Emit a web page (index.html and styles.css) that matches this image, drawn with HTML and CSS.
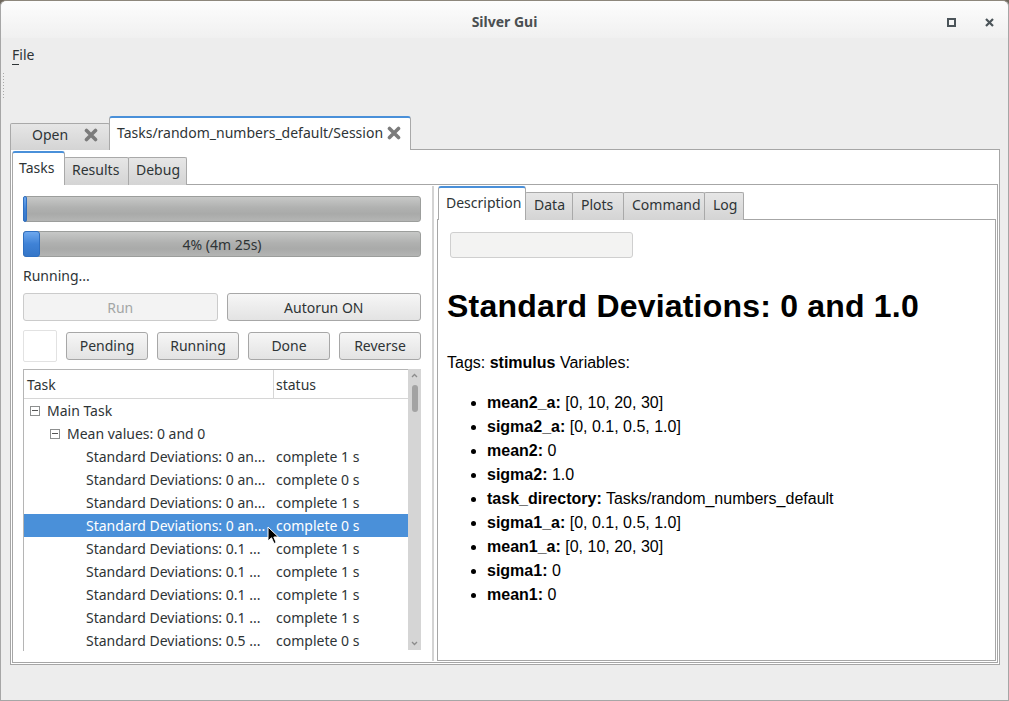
FILE: index.html
```html
<!DOCTYPE html>
<html>
<head>
<meta charset="utf-8">
<link rel="stylesheet" href="styles.css">
</head>
<body>
<div class="window">
  <div class="titlebar">
    <span class="title">Silver Gui</span>
    <div class="wm-buttons">
      <svg class="wm-max" width="9" height="9" viewBox="0 0 9 9"><rect x="1" y="1" width="7" height="7" fill="none" stroke="#4b5459" stroke-width="2"/></svg>
      <svg class="wm-close" width="9" height="9" viewBox="0 0 9 9"><path d="M1 1 L8 8 M8 1 L1 8" stroke="#4b5459" stroke-width="2.2"/></svg>
    </div>
  </div>
  <div class="menubar"><span class="menu-item"><u>F</u>ile</span></div>
  <div class="toolbar"><div class="handle"></div></div>

  <div class="tabs outer-tabs">
    <div class="tab inactive open-tab">Open
      <svg class="close" width="14" height="14" viewBox="0 0 14 14"><path d="M2.5 2.5 L11.5 11.5 M11.5 2.5 L2.5 11.5" stroke="#7b7b7b" stroke-width="3.6" stroke-linecap="round"/></svg>
    </div>
    <div class="tab active session-tab">Tasks/random_numbers_default/Session
      <svg class="close" width="14" height="14" viewBox="0 0 14 14"><path d="M2.5 2.5 L11.5 11.5 M11.5 2.5 L2.5 11.5" stroke="#7b7b7b" stroke-width="3.6" stroke-linecap="round"/></svg>
    </div>
  </div>
  <div class="outer-pane">
    <div class="tabs inner-tabs">
      <div class="tab active">Tasks</div>
      <div class="tab inactive">Results</div>
      <div class="tab inactive">Debug</div>
    </div>
    <div class="inner-pane">
      <div class="left">
        <div class="progress"><div class="chunk thin"></div></div>
        <div class="progress p2"><div class="chunk wide"></div><span class="ptext">4% (4m 25s)</span></div>
        <div class="status-line">Running...</div>
        <div class="btn-row r1">
          <div class="btn disabled">Run</div>
          <div class="btn">Autorun ON</div>
        </div>
        <div class="btn-row r2">
          <div class="square"></div>
          <div class="btn">Pending</div>
          <div class="btn">Running</div>
          <div class="btn">Done</div>
          <div class="btn">Reverse</div>
        </div>
        <div class="tree">
          <div class="tree-main">
            <div class="tree-header">
              <div class="col c1">Task</div>
              <div class="col c2">status</div>
            </div>
            <div class="row"><div class="c1 l0"><span class="exp"></span>Main Task</div><div class="c2"></div></div>
            <div class="row"><div class="c1 l1"><span class="exp"></span>Mean values: 0 and 0</div><div class="c2"></div></div>
            <div class="row"><div class="c1 l2">Standard Deviations: 0 an...</div><div class="c2">complete 1 s</div></div>
            <div class="row"><div class="c1 l2">Standard Deviations: 0 an...</div><div class="c2">complete 0 s</div></div>
            <div class="row"><div class="c1 l2">Standard Deviations: 0 an...</div><div class="c2">complete 1 s</div></div>
            <div class="row selected"><div class="c1 l2">Standard Deviations: 0 an...</div><div class="c2">complete 0 s</div></div>
            <div class="row"><div class="c1 l2">Standard Deviations: 0.1 ...</div><div class="c2">complete 1 s</div></div>
            <div class="row"><div class="c1 l2">Standard Deviations: 0.1 ...</div><div class="c2">complete 1 s</div></div>
            <div class="row"><div class="c1 l2">Standard Deviations: 0.1 ...</div><div class="c2">complete 1 s</div></div>
            <div class="row"><div class="c1 l2">Standard Deviations: 0.1 ...</div><div class="c2">complete 1 s</div></div>
            <div class="row"><div class="c1 l2">Standard Deviations: 0.5 ...</div><div class="c2">complete 0 s</div></div>
          </div>
          <div class="scrollbar">
            <svg class="arr" width="7" height="5" viewBox="0 0 7 5"><path d="M1 4 L3.5 1.5 L6 4" fill="none" stroke="#8c8c8c" stroke-width="1.3"/></svg>
            <div class="thumb"></div>
            <div class="spacer"></div>
            <svg class="arr" width="7" height="5" viewBox="0 0 7 5"><path d="M1 1 L3.5 3.5 L6 1" fill="none" stroke="#8c8c8c" stroke-width="1.3"/></svg>
          </div>
          <svg class="cursor" width="14" height="20" viewBox="0 0 14 20"><path d="M1 1 L1 15 L4.5 11.8 L7 17.5 L9.2 16.5 L6.8 11 L11.5 11 Z" fill="#000" stroke="#fff" stroke-width="1"/></svg>
        </div>
      </div>
      <div class="splitter"></div>
      <div class="right">
        <div class="tabs right-tabs">
          <div class="tab active">Description</div>
          <div class="tab inactive">Data</div>
          <div class="tab inactive">Plots</div>
          <div class="tab inactive">Command</div>
          <div class="tab inactive">Log</div>
        </div>
        <div class="right-pane">
          <div class="search"></div>
          <h1 class="desc-title">Standard Deviations: 0 and 1.0</h1>
          <p class="tags">Tags: <b>stimulus</b> Variables:</p>
          <ul class="vars">
            <li><b>mean2_a:</b> [0, 10, 20, 30]</li>
            <li><b>sigma2_a:</b> [0, 0.1, 0.5, 1.0]</li>
            <li><b>mean2:</b> 0</li>
            <li><b>sigma2:</b> 1.0</li>
            <li><b>task_directory:</b> Tasks/random_numbers_default</li>
            <li><b>sigma1_a:</b> [0, 0.1, 0.5, 1.0]</li>
            <li><b>mean1_a:</b> [0, 10, 20, 30]</li>
            <li><b>sigma1:</b> 0</li>
            <li><b>mean1:</b> 0</li>
          </ul>
        </div>
      </div>
    </div>
  </div>
</div>
</body>
</html>
```

FILE: styles.css
```css
html, body {
  margin: 0;
  padding: 0;
}
body {
  width: 1009px;
  height: 701px;
  overflow: hidden;
  background: #6e675c;
  font-family: "Noto Sans", "DejaVu Sans", sans-serif;
  font-size: 14px;
  color: #2e3436;
}
.window {
  box-sizing: border-box;
  width: 1009px;
  height: 701px;
  background: #ededed;
  border: 1px solid #a6a6a6;
  border-top: 1px solid #8d877c;
  border-radius: 6px 6px 0 0;
  display: flex;
  flex-direction: column;
  position: relative;
}
.titlebar {
  height: 37px;
  flex: none;
  display: flex;
  align-items: center;
  justify-content: center;
  background: linear-gradient(#fdfdfd, #f0f0f0);
  border-radius: 6px 6px 0 0;
  position: relative;
}
.title {
  font-weight: bold;
  font-size: 14px;
  color: #4a4f51;
  margin-top: 3px;
}
.wm-buttons {
  position: absolute;
  right: 14px;
  top: 17px;
  display: flex;
  gap: 29px;
}
.menubar {
  height: 32px;
  flex: none;
  display: flex;
  align-items: center;
  padding-left: 11px;
}
.menu-item u {
  text-decoration: none;
  border-bottom: 1px solid #2e3436;
}
.menu-item {
  line-height: 17px;
}
.toolbar {
  height: 46px;
  flex: none;
  padding-left: 2px;
  padding-top: 3px;
  box-sizing: border-box;
}
.handle {
  width: 1px;
  height: 27px;
  background: repeating-linear-gradient(to bottom, #a9a9a9 0px, #a9a9a9 1px, transparent 1px, transparent 3px);
}

/* tabs */
.tabs {
  display: flex;
  align-items: flex-end;
  position: relative;
  z-index: 1;
  margin-bottom: -1px;
}
.tab {
  box-sizing: border-box;
  display: flex;
  align-items: center;
  border: 1px solid #a9a9a9;
  border-bottom: none;
  white-space: nowrap;
}
.tab.inactive {
  background: linear-gradient(#e6e6e6, #d4d4d4);
  border-radius: 2px 2px 0 0;
  margin-left: -1px;
  height: 28px;
  padding-bottom: 4px;
}
.tab.active {
  background: #fff;
  border-top: 2px solid #4a90d9;
  border-left-color: #a9a9a9;
  border-radius: 3px 3px 0 0;
  height: 34px;
  margin-left: -1px;
  padding-bottom: 3px;
}
.tab:first-child { margin-left: 0; }

.outer-tabs {
  margin-left: 9px;
  height: 34px;
}
.open-tab {
  width: 100px;
  height: 27px !important;
  padding-left: 21px;
  padding-bottom: 5px !important;
}
.open-tab .close { margin-left: 16px; }
.session-tab {
  width: 302px;
  padding-left: 7px;
}
.session-tab .close { margin-left: 4px; }

.outer-pane {
  box-sizing: border-box;
  margin-left: 9px;
  width: 990px;
  height: 516px;
  border: 1px solid #a6a6a6;
  background: #fff;
  padding: 1px;
  display: flex;
  flex-direction: column;
}
.inner-tabs {
  height: 34px;
}
.inner-tabs .tab.active {
  width: 53px;
  padding-left: 6px;
}
.inner-tabs .tab.inactive {
  padding-left: 7px;
  padding-right: 6px;
}
.inner-tabs .tab:nth-child(2) { width: 65px; }
.inner-tabs .tab:nth-child(3) { width: 59px; }

.inner-pane {
  box-sizing: border-box;
  flex: 1;
  border: 1px solid #a6a6a6;
  display: flex;
  min-height: 0;
}
.left {
  box-sizing: border-box;
  width: 417px;
  flex: none;
  padding: 11px 9px 0 10px;
  display: flex;
  flex-direction: column;
}
.progress {
  box-sizing: border-box;
  height: 26px;
  flex: none;
  border: 1px solid #9c9e9c;
  border-radius: 3px;
  background: linear-gradient(#c7c8c7, #b0b1b0 45%, #a9aaa9 70%, #b4b5b4);
  position: relative;
  display: flex;
  align-items: center;
  justify-content: center;
}
.p2 { margin-top: 9px; }
.chunk {
  position: absolute;
  left: -1px;
  top: -1px;
  bottom: -1px;
  border: 1px solid #2f6fc0;
  border-radius: 3px;
  background: linear-gradient(#6ea8ee, #3f82d6 50%, #3576c8);
  box-sizing: border-box;
}
.chunk.thin { width: 4px; }
.chunk.wide { width: 17px; }
.ptext { position: relative; }
.status-line {
  margin-top: 9px;
  height: 20px;
  line-height: 20px;
}
.btn-row {
  display: flex;
  gap: 9px;
  align-items: center;
}
.r1 { margin-top: 7px; height: 28px; }
.r2 { margin-top: 9px; height: 31px; }
.btn {
  box-sizing: border-box;
  flex: 1;
  height: 28px;
  border: 1px solid #a7a7a7;
  border-radius: 3px;
  background: linear-gradient(#f6f6f6, #e3e3e3);
  display: flex;
  align-items: center;
  justify-content: center;
}
.btn.disabled {
  background: #f3f3f3;
  border-color: #cbcbcb;
  color: #a3a6a6;
}
.square {
  box-sizing: border-box;
  width: 34px;
  height: 32px;
  flex: none;
  border: 1px solid #e2e2e2;
  background: #fff;
  border-radius: 2px;
}
.tree {
  margin-top: 8px;
  height: 282px;
  flex: none;
  display: flex;
  position: relative;
  overflow: hidden;
}
.tree-main {
  box-sizing: border-box;
  flex: 1;
  border-top: 1px solid #b5b5b5;
  border-left: 1px solid #b5b5b5;
}
.tree-header {
  display: flex;
  height: 29px;
  box-sizing: border-box;
  border-bottom: 1px solid #d6d6d6;
}
.tree-header .col {
  display: flex;
  align-items: center;
}
.c1 {
  box-sizing: border-box;
  width: 250px;
  flex: none;
  white-space: nowrap;
  overflow: hidden;
  display: flex;
  align-items: center;
}
.tree-header .c1 {
  padding-left: 3px;
  border-right: 1px solid #d6d6d6;
}
.tree-header .c2 { padding-left: 2px; }
.c2 {
  flex: 1;
  padding-left: 2px;
  white-space: nowrap;
  display: flex;
  align-items: center;
}
.row {
  display: flex;
  height: 23px;
}
.row.selected {
  background: #4a90d9;
  color: #fff;
}
.l0 { padding-left: 6px; }
.l1 { padding-left: 26px; }
.l2 { padding-left: 62px; }
.exp {
  box-sizing: border-box;
  width: 10px;
  height: 10px;
  border: 1px solid #8d8f8f;
  margin-right: 7px;
  position: relative;
}
.exp::after {
  content: "";
  position: absolute;
  left: 1px;
  right: 1px;
  top: 3.5px;
  height: 1px;
  background: #555;
}
.scrollbar {
  width: 13px;
  flex: none;
  background: #d5d5d5;
  display: flex;
  flex-direction: column;
  align-items: center;
  padding-top: 4px;
  box-sizing: border-box;
  height: 281px;
}
.arr { flex: none; }
.thumb {
  width: 6px;
  height: 27px;
  background: #a3a3a3;
  border-radius: 3px;
  margin-top: 7px;
}
.spacer { flex: 1; }
.scrollbar .arr:last-child { margin-bottom: 4px; }
.cursor {
  position: absolute;
  left: 244px;
  top: 157px;
}
.splitter {
  width: 7px;
  flex: none;
  margin: 1px 0;
  background-color: #fff;
  background-image:
    radial-gradient(circle, #d0d0d0 0.7px, transparent 0.8px);
  background-size: 2px 2px;
  background-position: 2px 0;
  background-repeat: repeat-y;
  background-clip: content-box;
  padding: 0 1px 0 2px;
  box-sizing: border-box;
}
.right {
  box-sizing: border-box;
  flex: 1;
  margin: 1px 1px 1px 0;
  display: flex;
  flex-direction: column;
}
.right-tabs {
  height: 34px;
  padding-left: 1px;
}
.right-tabs .tab.active {
  width: 88px;
  padding-left: 7px;
}
.right-tabs .tab.inactive {
  padding-left: 8px;
}
.right-tabs .tab:nth-child(2) { width: 48px; }
.right-tabs .tab:nth-child(3) { width: 52px; }
.right-tabs .tab:nth-child(4) { width: 82px; }
.right-tabs .tab:nth-child(5) { width: 40px; }
.right-pane {
  box-sizing: border-box;
  flex: 1;
  border: 1px solid #a6a6a6;
  background: #fff;
  padding: 12px 0 0 9px;
  font-family: "Liberation Sans", Arial, sans-serif;
  font-size: 16px;
  color: #000;
  overflow: hidden;
}
.search {
  box-sizing: border-box;
  width: 183px;
  height: 26px;
  margin-left: 3px;
  background: #f3f3f2;
  border: 1px solid #cfcfcf;
  border-radius: 3px;
}
.desc-title {
  font-size: 32px;
  line-height: 37px;
  margin: 30px 0 0 0;
  font-weight: bold;
  letter-spacing: 0.2px;
}
.tags {
  margin: 28px 0 0 0;
  line-height: 19px;
}
.vars {
  margin: 19px 0 0 0;
  padding-left: 40px;
  line-height: 24px;
}
```
